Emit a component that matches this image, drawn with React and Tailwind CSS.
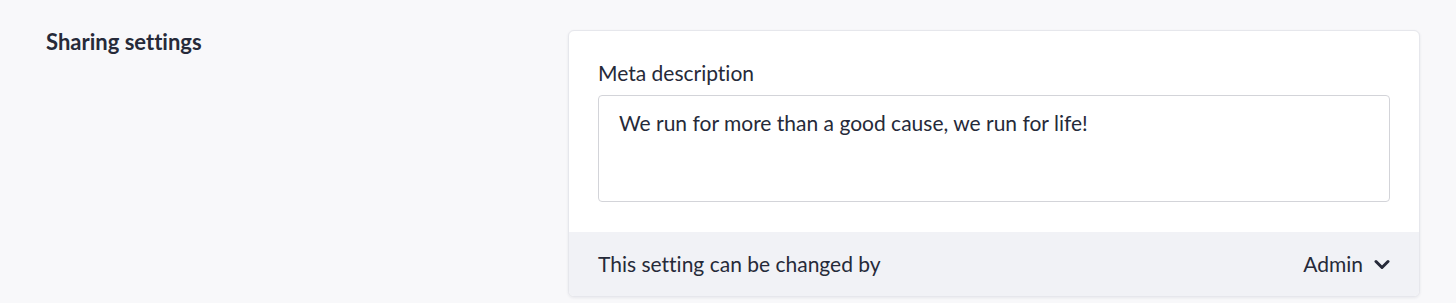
export default function App() {
  return (
    <div className="min-h-[303px] w-full bg-[#f8f8fa] font-['Lato','Liberation_Sans',sans-serif] text-[#262a39] [font-variant-ligatures:none]">
      <div className="flex pl-[46px] pr-[36px] pt-[30px]">
        {/* Left label */}
        <div className="w-[522px] shrink-0">
          <h2 className="text-[22px] font-bold leading-[24px]">Sharing settings</h2>
        </div>

        {/* Card */}
        <div className="flex-1 overflow-hidden rounded-md border border-[#e6e7ec] bg-white shadow-[0_1px_3px_rgba(30,35,60,0.08)]">
          <div className="px-[29px] pt-[28px] pb-[30px]">
            <label className="block text-[21px] leading-[28px]">Meta description</label>
            <div className="mt-[8px] h-[107px] rounded-[4px] border border-[#d3d4d9] px-[20px] pt-[13px] text-[21px] leading-[28px]">
              We run for more than a good cause, we run for life!
            </div>
          </div>
          <div className="flex h-[64px] items-center justify-between bg-[#f1f2f6] px-[29px] text-[21px] leading-[28px]">
            <span>This setting can be changed by</span>
            <span className="flex items-center gap-[11px]">
              Admin
              <svg width="16" height="11" viewBox="0 0 16 11" fill="none" stroke="currentColor" strokeWidth="3" strokeLinecap="round" strokeLinejoin="round">
                <polyline points="2,2.5 8,8.5 14,2.5" />
              </svg>
            </span>
          </div>
        </div>
      </div>
    </div>
  );
}
